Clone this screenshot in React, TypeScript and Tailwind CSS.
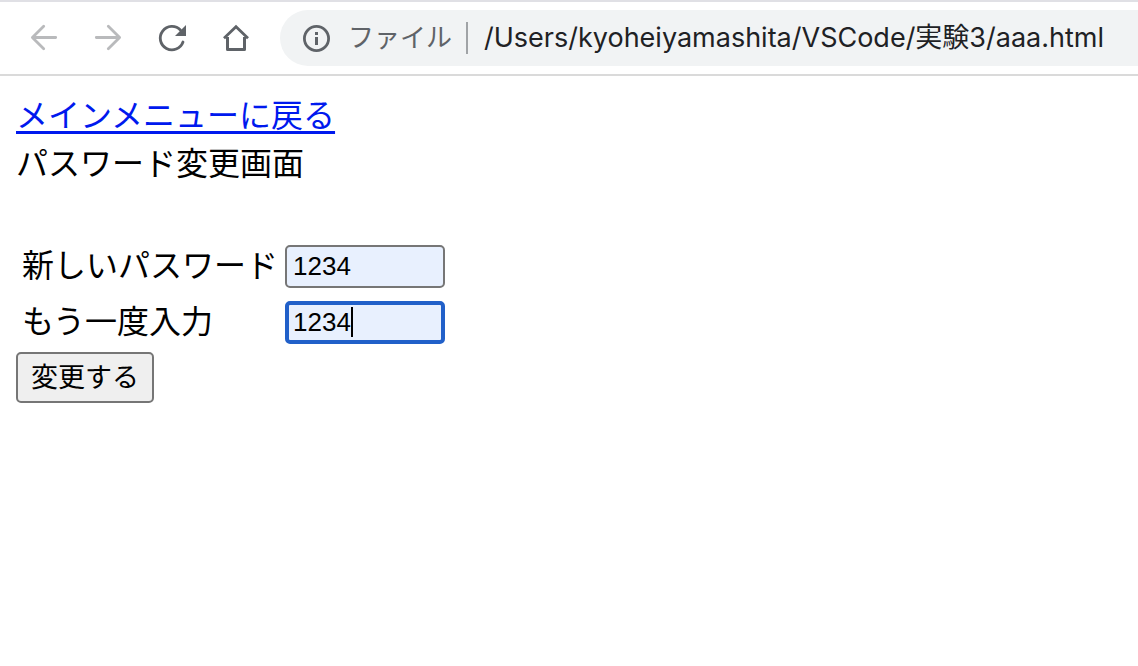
import { useState } from "react";

function BackIcon() {
  return (
    <svg width="32" height="32" viewBox="0 0 32 32" fill="none" stroke="#b9babc" strokeWidth="2.8" strokeLinecap="round" strokeLinejoin="round" aria-hidden="true">
      <path d="M27.7 15.5H4.5M15.7 4.3L4.4 15.5L15.7 26.8" />
    </svg>
  );
}

function ForwardIcon() {
  return (
    <svg width="32" height="32" viewBox="0 0 32 32" fill="none" stroke="#b9babc" strokeWidth="2.8" strokeLinecap="round" strokeLinejoin="round" aria-hidden="true">
      <path d="M4.3 15.5H27.5M16.3 4.3L27.6 15.5L16.3 26.8" />
    </svg>
  );
}

function ReloadIcon() {
  return (
    <svg width="32" height="32" viewBox="0 0 32 32" fill="none" aria-hidden="true">
      <path d="M27 20A11.7 11.7 0 1 1 24.4 8" stroke="#5f6368" strokeWidth="2.8" strokeLinecap="round" />
      <path d="M30 3V14H19Z" fill="#5f6368" />
    </svg>
  );
}

function HomeIcon() {
  return (
    <svg width="32" height="32" viewBox="0 0 32 32" fill="none" stroke="#5f6368" strokeWidth="3" aria-hidden="true">
      <path d="M7.5 15V27.4H24.5V15" strokeLinejoin="round" />
      <path d="M4 16.2L16 4.8L28 16.2" strokeWidth="2.8" />
    </svg>
  );
}

function InfoIcon() {
  return (
    <svg width="28" height="28" viewBox="0 0 28 28" fill="none" className="shrink-0" aria-hidden="true">
      <circle cx="14.5" cy="14.5" r="12.1" stroke="#5f6368" strokeWidth="2.8" />
      <path d="M13 8H16V11H13ZM13 13H16V21H13Z" fill="#5f6368" />
    </svg>
  );
}

function Toolbar() {
  return (
    <header className="flex h-[76px] items-center overflow-hidden border-y-2 border-t-[#e0e0e5] border-b-[#dadada] pl-7">
      <nav className="flex shrink-0 gap-8" aria-label="ナビゲーション">
        <button type="button" aria-label="戻る"><BackIcon /></button>
        <button type="button" aria-label="進む"><ForwardIcon /></button>
        <button type="button" aria-label="再読み込み"><ReloadIcon /></button>
        <button type="button" aria-label="ホーム"><HomeIcon /></button>
      </nav>
      <div className="ml-7 flex h-14 min-w-0 flex-1 items-center rounded-l-full bg-[#f1f3f4] pl-[22px] font-['Inter','Noto_Sans_CJK_JP',sans-serif] text-[27px] leading-8 whitespace-nowrap">
        <InfoIcon />
        <span className="ml-[18px] text-[26px] text-[#5f6368]">ファイル</span>
        <span className="ml-3.5 h-8 w-0.5 shrink-0 bg-[#a0a3a6]" />
        <span className="ml-4 text-[#202124]">/Users/kyoheiyamashita/VSCode/実験3/aaa.html</span>
      </div>
    </header>
  );
}

export default function App() {
  const [password, setPassword] = useState("1234");
  const [confirmation, setConfirmation] = useState("1234");

  return (
    <div className="min-h-screen bg-white font-['Liberation_Sans','Noto_Sans_CJK_JP',sans-serif] text-black">
      <Toolbar />
      <main className="p-4 text-[32px] leading-[48px]">
        <a href="#menu" className="block w-fit text-[#0019ee] underline decoration-[3px] underline-offset-[4px] [text-decoration-skip-ink:none]">メインメニューに戻る</a>
        <p>パスワード変更画面</p>
        <form className="mt-12" onSubmit={(event) => event.preventDefault()}>
          <table className="border-separate border-spacing-1">
            <tbody>
              <tr>
                <td className="py-0.5 pr-px pl-0.5"><label htmlFor="password">新しいパスワード</label></td>
                <td className="p-0.5">
                  <div className="flex">
                    <input
                      id="password"
                      type="text"
                      value={password}
                      onChange={(event) => setPassword(event.target.value)}
                      className="h-[43px] w-40 rounded-[5px] border-2 border-[#767676] bg-[#e8f0fe] px-1.5 text-[26px] leading-8 outline-none"
                    />
                  </div>
                </td>
              </tr>
              <tr>
                <td className="py-0.5 pr-px pl-0.5"><label htmlFor="confirmation">もう一度入力</label></td>
                <td className="p-0.5">
                  <div className="relative flex items-center">
                    <input
                      id="confirmation"
                      type="text"
                      value={confirmation}
                      onChange={(event) => setConfirmation(event.target.value)}
                      className="h-[43px] w-40 rounded-[5px] border-4 border-[#2160c9] bg-[#e8f0fe] px-1 text-[26px] leading-8 caret-transparent outline-none"
                    />
                    <span className="absolute left-[66px] h-[30px] w-0.5 bg-black" />
                  </div>
                </td>
              </tr>
            </tbody>
          </table>
          <button type="submit" className="flex h-[51px] items-center rounded-[5px] border-2 border-[#767676] bg-[#efefef] px-[13px] text-[27px]">
            変更する
          </button>
        </form>
      </main>
    </div>
  );
}
